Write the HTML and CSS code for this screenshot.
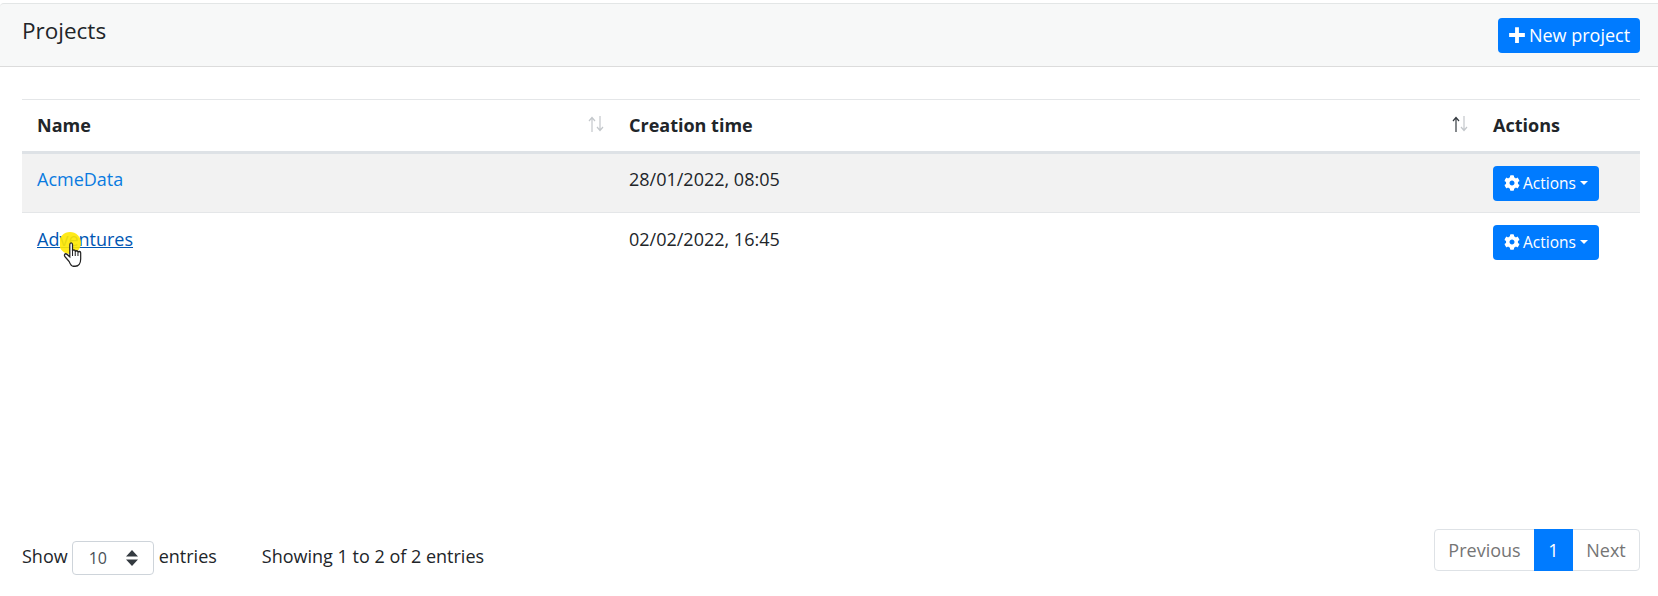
FILE: index.html
```html
<!DOCTYPE html>
<html lang="en">
<head>
<meta charset="utf-8">
<title>Projects</title>
<link rel="stylesheet" href="styles.css">
</head>
<body>
<div class="card">
  <header class="card-header">
    <h1 class="title">Projects</h1>
    <button class="btn btn-new"><svg class="icon-plus" viewBox="0 0 16 16"><path d="M6.300 1h3.400v5.300H15v3.400H9.700V15H6.300V9.700H1V6.300h5.300z"/></svg>New project</button>
  </header>
  <div class="card-body">
    <table class="table">
      <thead>
        <tr>
          <th class="col-name"><div class="th-inner">Name<svg class="sort" viewBox="0 0 18 18"><path class="off" d="M5 17V3M2 6l3-3.500L8 6"/><path class="off" d="M13 1v14M10 12l3 3.500 3-3.500"/></svg></div></th>
          <th class="col-time"><div class="th-inner">Creation time<svg class="sort" viewBox="0 0 18 18"><path class="on" d="M5 17V3M2 6l3-3.500L8 6"/><path class="off" d="M13 1v14M10 12l3 3.500 3-3.500"/></svg></div></th>
          <th class="col-actions">Actions</th>
        </tr>
      </thead>
      <tbody>
        <tr class="odd">
          <td class="cell-text"><a class="link" href="#">AcmeData</a></td>
          <td class="cell-text">28/01/2022, 08:05</td>
          <td class="cell-action"><button class="btn btn-sm"><svg class="icon-gear" viewBox="0 0 512 512"><path d="M487.400 315.700l-42.600-24.600c4.300-23.200 4.300-47 0-70.200l42.600-24.600c4.900-2.800 7.100-8.600 5.500-14-11.100-35.600-30-67.800-54.700-94.600-3.800-4.100-10-5.100-14.800-2.300L380.800 110c-17.900-15.400-38.500-27.300-60.800-35.100V25.800c0-5.600-3.900-10.500-9.400-11.700-36.700-8.200-74.300-7.800-109.200 0-5.500 1.200-9.400 6.100-9.400 11.700V75c-22.200 7.900-42.800 19.800-60.800 35.100L88.700 85.500c-4.900-2.800-11-1.900-14.800 2.300-24.700 26.700-43.600 58.900-54.700 94.600-1.700 5.400.6 11.200 5.500 14L67.300 221c-4.300 23.200-4.300 47 0 70.200l-42.600 24.600c-4.900 2.800-7.100 8.600-5.500 14 11.100 35.600 30 67.800 54.700 94.600 3.800 4.100 10 5.100 14.800 2.300l42.600-24.600c17.900 15.400 38.500 27.300 60.800 35.100v49.200c0 5.600 3.900 10.500 9.400 11.700 36.700 8.200 74.300 7.800 109.200 0 5.500-1.200 9.400-6.100 9.400-11.700v-49.200c22.200-7.900 42.800-19.800 60.800-35.100l42.600 24.600c4.900 2.800 11 1.900 14.800-2.300 24.700-26.700 43.600-58.900 54.700-94.600 1.500-5.500-.7-11.300-5.600-14.100zM256 336c-44.100 0-80-35.900-80-80s35.900-80 80-80 80 35.900 80 80-35.900 80-80 80z"/></svg>Actions<span class="caret"></span></button></td>
        </tr>
        <tr class="even">
          <td class="cell-text cursor-cell"><a class="link link-hover" href="#">Adventures</a>
            <svg class="cursor" viewBox="0 0 34 40"><circle class="spot" cx="10" cy="11" r="11"/><g transform="translate(3 5.500) scale(.68 .8)"><path class="hand" d="M9 30l-6-6c-2-2 0-5 3-3l4 3V9c0-3 4-3 4 0v8c0-2 4-2 4 0v1c0-2 4-2 4 0v1c0-2 4-2 4 0v8c0 5-3 9-8 9h-3c-3 0-4-2-6-6z"/><path class="hand-line" d="M14 17v6M18 18v5M22 19v4"/></g></svg>
          </td>
          <td class="cell-text">02/02/2022, 16:45</td>
          <td class="cell-action"><button class="btn btn-sm"><svg class="icon-gear" viewBox="0 0 512 512"><path d="M487.400 315.700l-42.600-24.600c4.300-23.200 4.300-47 0-70.200l42.600-24.600c4.900-2.800 7.100-8.600 5.500-14-11.100-35.600-30-67.800-54.700-94.600-3.800-4.100-10-5.100-14.800-2.300L380.800 110c-17.900-15.400-38.500-27.300-60.800-35.100V25.800c0-5.600-3.900-10.500-9.400-11.700-36.700-8.200-74.300-7.800-109.200 0-5.500 1.200-9.400 6.100-9.400 11.700V75c-22.200 7.900-42.800 19.800-60.800 35.100L88.700 85.500c-4.900-2.800-11-1.900-14.800 2.300-24.700 26.700-43.600 58.900-54.700 94.600-1.700 5.400.6 11.200 5.500 14L67.300 221c-4.300 23.200-4.300 47 0 70.200l-42.600 24.600c-4.900 2.800-7.100 8.600-5.500 14 11.100 35.600 30 67.800 54.700 94.600 3.800 4.100 10 5.100 14.800 2.300l42.600-24.600c17.900 15.400 38.500 27.300 60.800 35.100v49.200c0 5.600 3.900 10.500 9.400 11.700 36.700 8.200 74.300 7.800 109.200 0 5.500-1.200 9.400-6.100 9.400-11.700v-49.200c22.200-7.900 42.800-19.800 60.800-35.100l42.600 24.600c4.900 2.800 11 1.900 14.800-2.300 24.700-26.700 43.600-58.900 54.700-94.600 1.500-5.500-.7-11.300-5.600-14.100zM256 336c-44.100 0-80-35.900-80-80s35.900-80 80-80 80 35.900 80 80-35.900 80-80 80z"/></svg>Actions<span class="caret"></span></button></td>
        </tr>
      </tbody>
    </table>
    <footer class="table-footer">
      <div class="length">
        <span class="length-text">Show</span>
        <div class="select"><span class="select-value">10</span><svg class="select-arrows" viewBox="0 0 12 18"><path d="M6 1l6 6.500H0zM6 17l-6-6.500h12z"/></svg></div>
        <span class="length-text">entries</span>
        <span class="length-text info">Showing 1 to 2 of 2 entries</span>
      </div>
      <nav class="pagination">
        <a class="page page-prev" href="#">Previous</a>
        <a class="page page-active" href="#">1</a>
        <a class="page page-next" href="#">Next</a>
      </nav>
    </footer>
  </div>
</div>
</body>
</html>
```
FILE: styles.css
```css
* { box-sizing: border-box; }
html, body { margin: 0; padding: 0; background: #fff; }
body {
  font-family: "Open Sans", "Liberation Sans", sans-serif;
  font-size: 18px;
  line-height: 24px;
  color: #212529;
  height: 596px;
  overflow: hidden;
  padding-top: 3px;
}
.card { height: 593px; display: flex; flex-direction: column; }
.card-header {
  height: 64px;
  background: #f7f8f8;
  border-top: 1px solid #e3e6e6;
  border-bottom: 1px solid #dcdcdc;
  border-top-left-radius: 4px;
  display: flex;
  justify-content: space-between;
  align-items: flex-start;
  padding: 11px 18px 0 22px;
}
.title { margin: 0; font-size: 22.500px; line-height: 31px; font-weight: 400; color: #212529; }
.btn {
  border: 0;
  background: #007bff;
  color: #fff;
  font-family: inherit;
  border-radius: 4px;
  display: inline-flex;
  align-items: center;
}
.btn-new { width: 142px; height: 35px; padding: 0 0 2px; font-size: 18px; justify-content: center; white-space: nowrap; margin-top: 3px; }
.icon-plus { width: 18px; height: 18px; fill: #fff; margin-right: 3px; }
.card-body { flex: 1; padding: 32px 18px 0 22px; display: flex; flex-direction: column; }
.table { width: 100%; border-collapse: collapse; table-layout: fixed; border-top: 1px solid #e4e6e8; }
.table th { height: 53px; font-weight: 700; text-align: left; padding: 0 15px 2px; border-bottom: 3px solid #dee2e6; font-size: 18px; }
.col-name { width: 592px; }
.col-time { width: 864px; }
.th-inner { display: flex; justify-content: space-between; align-items: center; }
.sort { width: 18px; height: 18px; fill: none; stroke-width: 1.200; margin-right: -6px; margin-top: -2px; }
.sort .off { stroke: #c3c7cb; }
.sort .on { stroke: #343a40; }
.table td { height: 60px; padding: 0 15px; vertical-align: top; border-bottom: 1px solid #e4e6e8; }
.table tbody tr:last-child td { border-bottom: 0; }
.odd .cell-text { padding-top: 13px; }
.even .cell-text { padding-top: 14px; }
.table .cell-action { padding-top: 12px; }
.odd td { background: #f2f2f2; }
.link { color: #0a7be0; text-decoration: none; }
.link-hover { color: #0056b3; text-decoration: underline; }
.cursor-cell { position: relative; }
.cursor { position: absolute; left: 38px; top: 19px; width: 34px; height: 40px; }
.spot { fill: #ffe800; opacity: .9; }
.hand { fill: #fff; stroke: #222; stroke-width: 1.800; }
.hand-line { fill: none; stroke: #222; stroke-width: 1.500; }
.btn-sm { width: 106px; height: 35px; padding: 0 0 2px; font-size: 15.500px; justify-content: center; white-space: nowrap; }
.icon-gear { width: 16px; height: 16px; fill: #fff; margin-right: 3px; }
.caret { display: inline-block; margin-left: 4px; border-top: 4.500px solid #fff; border-left: 4px solid transparent; border-right: 4px solid transparent; }
.table-footer { margin-top: auto; margin-bottom: 21px; display: flex; justify-content: space-between; align-items: flex-start; }
.length { display: flex; align-items: flex-start; padding-top: 12px; }
.length-text { line-height: 30px; }
.select { width: 82px; height: 34px; margin: 0 5px 0 4px; border: 1px solid #ced4da; border-radius: 4px; display: flex; align-items: center; justify-content: space-between; padding: 0 14px 0 16px; color: #495057; font-size: 16px; }
.select-arrows { width: 14px; height: 18px; fill: #343a40; }
.info { margin-left: 45px; }
.pagination { display: flex; height: 42px; border: 1px solid #dee2e6; border-radius: 4px; }
.page { display: flex; align-items: center; justify-content: center; color: #757575; text-decoration: none; }
.page-prev { width: 99px; }
.page-active { width: 39px; background: #007bff; color: #fff; margin: -1px 0; }
.page-next { width: 66px; }
```
